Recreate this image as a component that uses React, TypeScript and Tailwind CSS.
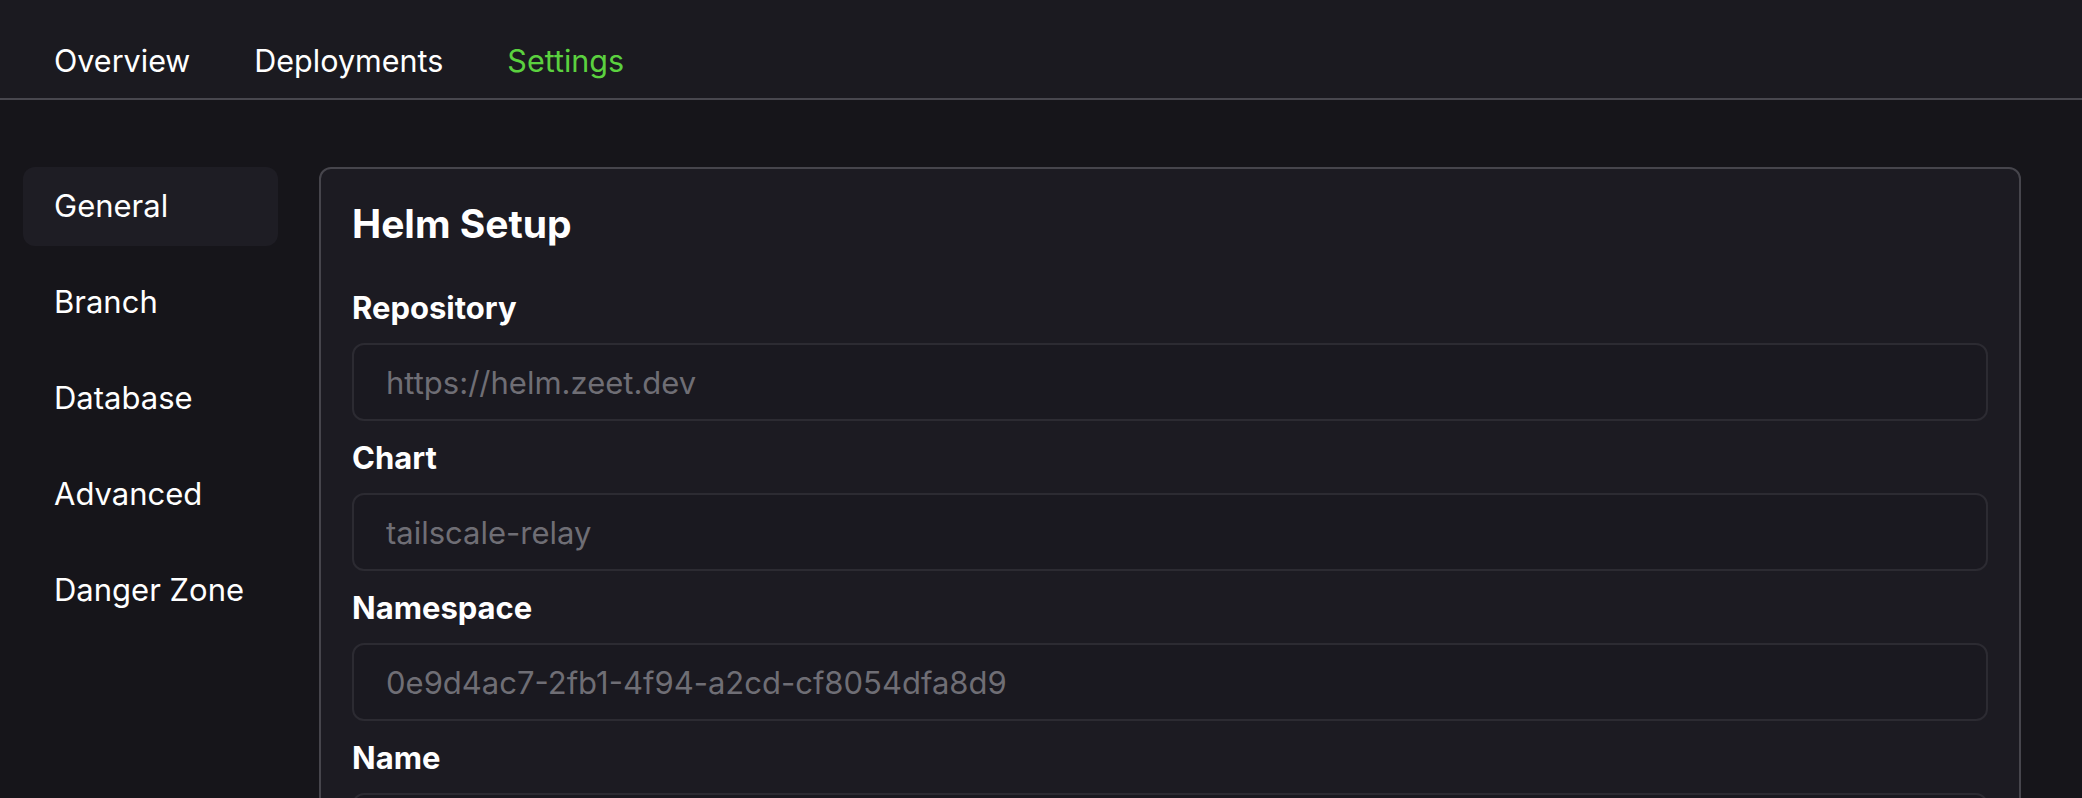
const tabs = ["Overview", "Deployments", "Settings"];
const sections = ["General", "Branch", "Database", "Advanced", "Danger Zone"];

const fields = [
  { label: "Repository", placeholder: "https://helm.zeet.dev" },
  { label: "Chart", placeholder: "tailscale-relay" },
  { label: "Namespace", placeholder: "0e9d4ac7-2fb1-4f94-a2cd-cf8054dfa8d9" },
  { label: "Name", placeholder: "tailscale-relay" },
];

function Field({ label, placeholder }: { label: string; placeholder: string }) {
  return (
    <div className="flex flex-col">
      <label className="text-[31px] leading-[40px] font-bold text-white mb-[15px]">
        {label}
      </label>
      <input
        type="text"
        placeholder={placeholder}
        className="h-[78px] w-full rounded-[12px] border-2 border-[#2c2b32] bg-[#1a1920] px-[32px] text-[31px] text-white placeholder:text-[#6f6e75] outline-none"
      />
    </div>
  );
}

export default function App() {
  return (
    <div
      className="min-h-[798px] h-[798px] overflow-hidden bg-[#16151a] text-white"
      style={{ fontFamily: "Inter, 'Noto Sans', sans-serif" }}
    >
      <nav className="h-[100px] border-b-2 border-[#48474e] bg-[#1b1a20] px-[54px] pt-[40px]">
        <div className="flex gap-[64px]">
          {tabs.map((tab) => (
            <a
              key={tab}
              href="#"
              className={`text-[30.5px] leading-[42px] ${
                tab === "Settings" ? "text-[#5bd13f]" : "text-white"
              }`}
            >
              {tab}
            </a>
          ))}
        </div>
      </nav>

      <div className="flex pt-[67px] pl-[23px] pr-[61px] gap-[41px]">
        <aside className="w-[255px] shrink-0 flex flex-col gap-[17px]">
          {sections.map((s, i) => (
            <a
              key={s}
              href="#"
              className={`h-[79px] flex items-center pl-[31px] rounded-[12px] text-[31px] text-white ${
                i === 0 ? "bg-[#1e1d24]" : ""
              }`}
            >
              {s}
            </a>
          ))}
        </aside>

        <main className="flex-1 rounded-[12px] border-2 border-[#46454c] bg-[#1c1b22] px-[31px] pt-[31px] pb-[32px]">
          <h2 className="text-[39px] leading-[48px] font-bold mb-[40px]">Helm Setup</h2>
          <div className="flex flex-col gap-[17px]">
            {fields.map((f) => (
              <Field key={f.label} {...f} />
            ))}
          </div>
        </main>
      </div>
    </div>
  );
}
